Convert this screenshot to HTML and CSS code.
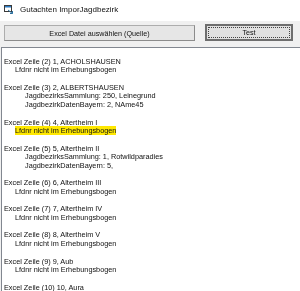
FILE: index.html
```html
<!DOCTYPE html>
<html lang="de">
<head>
  <meta charset="UTF-8">
  <title>Gutachten ImporJagdbezirk</title>
  <link rel="stylesheet" href="styles.css">
</head>
<body>
  <div class="window">
    <div class="titlebar">
      <svg class="app-icon" width="9" height="9" viewBox="0 0 9 9">
        <rect x="0.5" y="0.5" width="7" height="6" fill="#fff" stroke="#3a3a3a"/>
        <rect x="1" y="1" width="6" height="1.5" fill="#2b7bc4"/>
        <path d="M4 5 L8.5 8.5 M6 8.5 H8.5 V6" stroke="#2a6f9e" fill="none"/>
      </svg>
      <span class="title">Gutachten ImporJagdbezirk</span>
    </div>

    <div class="toolbar">
      <button class="btn btn-source">Excel Datei auswählen (Quelle)</button>
      <button class="btn btn-test">Test</button>
    </div>

    <div class="log">
      <div class="line"></div>
      <div class="line">Excel Zeile (2) 1, ACHOLSHAUSEN</div>
      <div class="line ind1">Lfdnr nicht im Erhebungsbogen</div>
      <div class="line"></div>
      <div class="line">Excel Zeile (3) 2, ALBERTSHAUSEN</div>
      <div class="line ind2">JagdbezirksSammlung: 250, Leinegrund</div>
      <div class="line ind2">JagdbezirkDatenBayern: 2, NAme45</div>
      <div class="line"></div>
      <div class="line">Excel Zeile (4) 4, Altertheim I</div>
      <div class="line ind1"><span class="mark">Lfdnr nicht im Erhebungsbogen</span></div>
      <div class="line"></div>
      <div class="line">Excel Zeile (5) 5, Altertheim II</div>
      <div class="line ind2">JagdbezirksSammlung: 1, Rotwildparadies</div>
      <div class="line ind2">JagdbezirkDatenBayern: 5,</div>
      <div class="line"></div>
      <div class="line">Excel Zeile (6) 6, Altertheim III</div>
      <div class="line ind1">Lfdnr nicht im Erhebungsbogen</div>
      <div class="line"></div>
      <div class="line">Excel Zeile (7) 7, Altertheim IV</div>
      <div class="line ind1">Lfdnr nicht im Erhebungsbogen</div>
      <div class="line"></div>
      <div class="line">Excel Zeile (8) 8, Altertheim V</div>
      <div class="line ind1">Lfdnr nicht im Erhebungsbogen</div>
      <div class="line"></div>
      <div class="line">Excel Zeile (9) 9, Aub</div>
      <div class="line ind1">Lfdnr nicht im Erhebungsbogen</div>
      <div class="line"></div>
      <div class="line">Excel Zeile (10) 10, Aura</div>
    </div>
  </div>
</body>
</html>
```

FILE: styles.css
```css
html, body {
  margin: 0;
  height: 100%;
  overflow: hidden;
}
body {
  font-family: "Liberation Sans", Arial, sans-serif;
  color: #000;
  background-color: #f0f0f0;
}
/* own layer with no background of its own: small text gets grey antialiasing */
.window {
  display: flex;
  flex-direction: column;
  height: 291px;
  will-change: transform;
}
.titlebar {
  display: flex;
  align-items: center;
  gap: 7px;
  height: 19px;
  padding: 0 0 2px 4px;
  background-color: #fff;
  font-size: 8px;
  color: #111;
}
.app-icon {
  display: block;
}
.toolbar {
  display: flex;
  align-items: flex-start;
  gap: 10px;
  height: 26px;
  padding: 3px 7px 0 4px;
  box-sizing: border-box;
}
.btn {
  font-family: inherit;
  font-size: 7.2px;
  color: #111;
  padding: 0;
  margin: 0;
  background-color: #e6e6e6;
  box-sizing: border-box;
}
.btn-source {
  width: 191px;
  height: 16px;
  margin-top: 1px;
  border: 1px solid #adadad;
  border-bottom-color: #8c8c8c;
  border-right-color: #8c8c8c;
}
.btn-test {
  width: 88px;
  height: 17px;
  border: 2px solid #6e6e6e;
  outline: 1px dotted #444;
  outline-offset: -4px;
  background-color: #e1e1e1;
}
.log {
  flex: 1;
  margin-left: 1px;
  padding: 1px 0 0 2px;
  background-color: #fff;
  border-top: 1px solid #828790;
  border-left: 1px solid #828790;
  font-size: 7.3px;
  line-height: 8.7px;
  overflow: hidden;
}
.line {
  height: 8.7px;
  color: #111;
  white-space: nowrap;
}
.ind1 {
  padding-left: 11px;
}
.ind2 {
  padding-left: 21px;
}
.mark {
  background-color: #ffe800;
}
```
